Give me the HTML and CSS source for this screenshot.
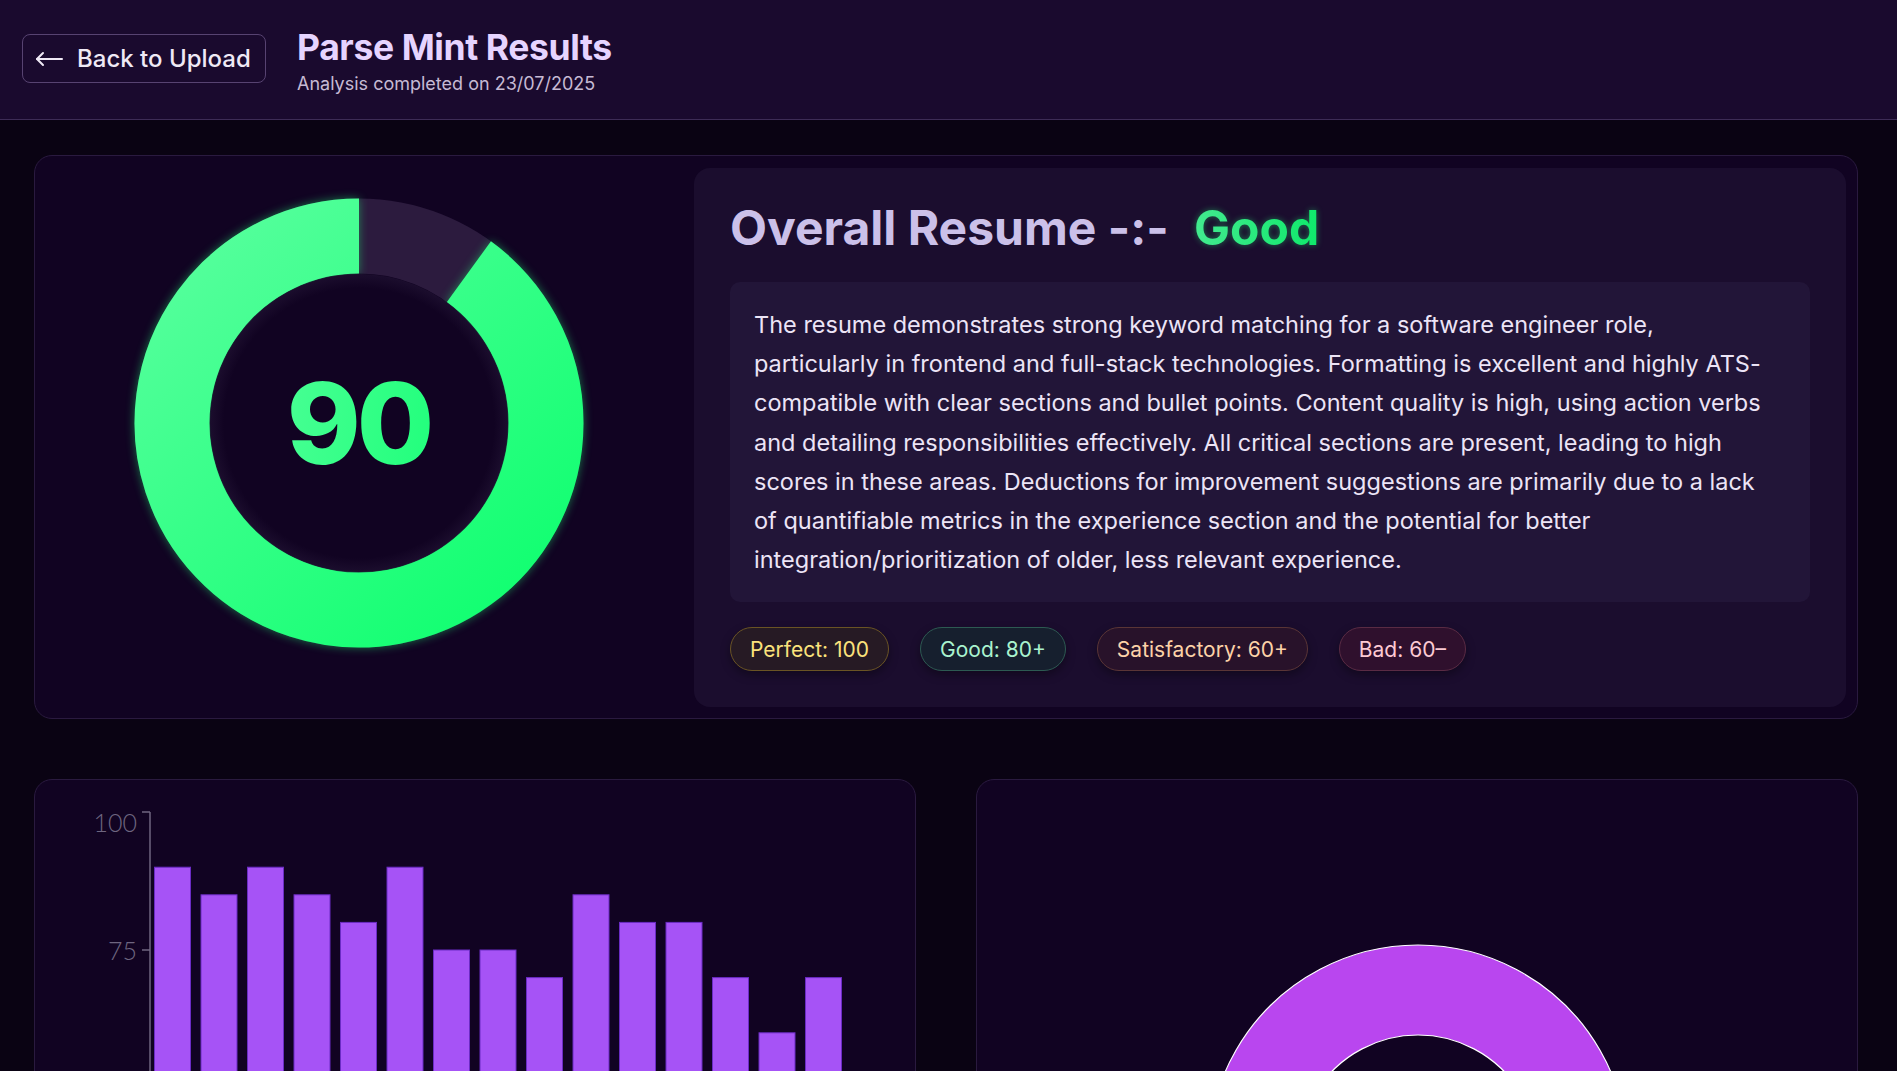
FILE: index.html
```html
<!DOCTYPE html>
<html lang="en">
<head>
<meta charset="utf-8">
<title>Parse Mint Results</title>
<link rel="stylesheet" href="styles.css">
</head>
<body>
<header class="topbar">
  <button class="back-btn">
    <svg class="back-icon" width="28" height="16" viewBox="0 0 28 16" fill="none" stroke="currentColor" stroke-width="2" stroke-linecap="round" stroke-linejoin="round"><path d="M27 8H2"/><path d="M8 2L2 8l6 6"/></svg>
    <span>Back to Upload</span>
  </button>
  <div class="title-block">
    <h1 class="page-title">Parse Mint Results</h1>
    <p class="page-sub">Analysis completed on 23/07/2025</p>
  </div>
</header>

<main class="content">
  <section class="summary-card">
    <div class="gauge-col">
      <div class="gauge">
        <svg class="gauge-svg" width="480" height="480" viewBox="0 0 480 480">
          <defs>
            <linearGradient id="gGreen" x1="60" y1="40" x2="420" y2="440" gradientUnits="userSpaceOnUse">
              <stop offset="0" stop-color="#58ff9e"/>
              <stop offset="1" stop-color="#0dff6e"/>
            </linearGradient>
            <radialGradient id="gInner" cx="240" cy="240" r="150" gradientUnits="userSpaceOnUse">
              <stop offset="0.9" stop-color="#110322"/>
              <stop offset="1" stop-color="#1c0e2e"/>
            </radialGradient>
          </defs>
          <circle cx="240" cy="240" r="187" fill="none" stroke="#2c1b3e" stroke-width="75"/>
          <path class="gauge-arc" d="M349.92 88.71 A187 187 0 1 1 240 53" fill="none" stroke="url(#gGreen)" stroke-width="75"/>
          <circle cx="240" cy="240" r="149" fill="url(#gInner)"/>
        </svg>
        <span class="gauge-value">90</span>
      </div>
    </div>

    <div class="summary-panel">
      <h2 class="summary-title">Overall Resume -:- <span class="grade">Good</span></h2>
      <div class="summary-text">
        <p>The resume demonstrates strong keyword matching for a software engineer role, particularly in frontend and full-stack technologies. Formatting is excellent and highly ATS-compatible with clear sections and bullet points. Content quality is high, using action verbs and detailing responsibilities effectively. All critical sections are present, leading to high scores in these areas. Deductions for improvement suggestions are primarily due to a lack of quantifiable metrics in the experience section and the potential for better integration/prioritization of older, less relevant experience.</p>
      </div>
      <div class="legend">
        <span class="badge badge-perfect">Perfect: 100</span>
        <span class="badge badge-good">Good: 80+</span>
        <span class="badge badge-sat">Satisfactory: 60+</span>
        <span class="badge badge-bad">Bad: 60–</span>
      </div>
    </div>
  </section>

  <section class="charts">
    <div class="chart-card">
      <svg class="bar-chart" width="880" height="640" viewBox="0 0 880 640">
        <g class="axis">
          <line x1="115" y1="32" x2="115" y2="640"/>
          <line x1="107" y1="32" x2="115" y2="32"/>
          <line x1="107" y1="170" x2="115" y2="170"/>
          <line x1="107" y1="308" x2="115" y2="308"/>
          <line x1="107" y1="446" x2="115" y2="446"/>
        </g>
        <g class="axis-labels">
          <text x="102" y="52">100</text>
          <text x="102" y="180">75</text>
        </g>
        <g class="bars">
          <rect x="119.5" y="87.2" width="36" height="560"/>
          <rect x="166" y="114.8" width="36" height="560"/>
          <rect x="212.5" y="87.2" width="36" height="560"/>
          <rect x="259" y="114.8" width="36" height="560"/>
          <rect x="305.5" y="142.4" width="36" height="560"/>
          <rect x="352" y="87.2" width="36" height="560"/>
          <rect x="398.5" y="170" width="36" height="560"/>
          <rect x="445" y="170" width="36" height="560"/>
          <rect x="491.5" y="197.6" width="36" height="560"/>
          <rect x="538" y="114.8" width="36" height="560"/>
          <rect x="584.5" y="142.4" width="36" height="560"/>
          <rect x="631" y="142.4" width="36" height="560"/>
          <rect x="677.5" y="197.6" width="36" height="560"/>
          <rect x="724" y="252.8" width="36" height="560"/>
          <rect x="770.5" y="197.6" width="36" height="560"/>
        </g>
      </svg>
    </div>
    <div class="chart-card">
      <svg class="pie-chart" width="880" height="640" viewBox="0 0 880 640">
        <path class="pie-ring" fill-rule="evenodd" d="M441 165a210 210 0 1 0 0.001 0z M441 255a120 120 0 1 0 0.001 0z"/>
      </svg>
    </div>
  </section>
</main>
</body>
</html>
```

FILE: styles.css
```css
* { box-sizing: border-box; }

html, body {
  margin: 0;
  padding: 0;
  background: #0a0313;
  font-family: Inter, "Noto Sans", sans-serif;
  color: #ece5f4;
}

body { overflow: hidden; }

.topbar {
  height: 120px;
  background: #1a0a2e;
  border-bottom: 1px solid #3d2c56;
  display: flex;
  align-items: center;
  gap: 31px;
  padding: 0 22px;
}

.back-btn {
  display: flex;
  align-items: center;
  gap: 14px;
  height: 49px;
  width: 244px;
  padding: 0 12px;
  margin-top: -2px;
  background: transparent;
  border: 1px solid #574371;
  border-radius: 8px;
  color: #efe9f5;
  font-family: inherit;
  font-size: 24px;
  font-weight: 500;
  letter-spacing: 0;
  cursor: pointer;
}

.back-icon { flex: none; }

.title-block {
  display: flex;
  flex-direction: column;
  margin-top: 4px;
}

.page-title {
  margin: 0;
  font-size: 35.5px;
  font-weight: 700;
  line-height: 42px;
  letter-spacing: -0.4px;
  color: #e6d4ff;
}

.page-sub {
  margin: 3px 0 0;
  font-size: 18px;
  line-height: 24px;
  letter-spacing: 0;
  color: #c6bad4;
}

.content {
  padding: 35px 39px 0 34px;
}

.summary-card {
  display: grid;
  grid-template-columns: 647px 1152px;
  column-gap: 12px;
  padding: 12px 11px 11px 0;
  background: #110322;
  border: 1px solid #2a1a3f;
  border-radius: 18px;
}

.gauge-col {
  display: flex;
  align-items: center;
  justify-content: center;
  padding-bottom: 30px;
}

.gauge {
  position: relative;
  width: 480px;
  height: 480px;
}

.gauge-svg { display: block; }

.gauge-arc {
  filter: drop-shadow(0 0 5px rgba(30, 255, 120, 0.45));
}

.gauge-value {
  position: absolute;
  left: 0;
  right: 0;
  top: 50%;
  transform: translateY(-50%);
  text-align: center;
  font-size: 112px;
  font-weight: 800;
  letter-spacing: -4px;
  line-height: 1;
  background: linear-gradient(100deg, #62ffa4 10%, #12ff72 80%);
  -webkit-background-clip: text;
  background-clip: text;
  color: transparent;
}

.summary-panel {
  background: #1b0d2e;
  border-radius: 16px;
  padding: 30px 36px 36px;
}

.summary-title {
  margin: 0;
  font-size: 48px;
  font-weight: 700;
  line-height: 60px;
  letter-spacing: 0;
  color: #cbc0e9;
}

.grade {
  margin-left: 14px;
  background: linear-gradient(90deg, #43ea8f, #0fe96b);
  -webkit-background-clip: text;
  background-clip: text;
  color: transparent;
  filter: drop-shadow(0 0 3px rgba(30, 230, 110, 0.45));
}

.summary-text {
  margin-top: 24px;
  background: #221538;
  border-radius: 10px;
  padding: 23px 28px 23px 24px;
}

.summary-text p {
  margin: 0;
  font-size: 23.5px;
  line-height: 39.2px;
  letter-spacing: 0;
  color: #ece4f6;
}

.legend {
  display: flex;
  gap: 31px;
  margin-top: 25px;
}

.badge {
  display: inline-flex;
  align-items: center;
  height: 44px;
  padding: 0 19px;
  border-radius: 999px;
  border: 1px solid;
  font-size: 21px;
  letter-spacing: 0;
  box-shadow: 0 4px 10px rgba(0, 0, 0, 0.35);
}

.badge-perfect { background: #261a24; border-color: #6a5424; color: #fbe27c; }
.badge-good { background: #161f2e; border-color: #2d5a52; color: #a9f3cf; }
.badge-sat { background: #28122a; border-color: #5a3536; color: #fdd2a8; }
.badge-bad { background: #2f102d; border-color: #5a2b44; color: #fccad3; }

.charts {
  display: grid;
  grid-template-columns: 1fr 1fr;
  gap: 60px;
  margin-top: 60px;
}

.chart-card {
  height: 700px;
  background: #110322;
  border: 1px solid #2a1a3f;
  border-radius: 18px;
  overflow: hidden;
}

.bar-chart, .pie-chart { display: block; }

.axis line {
  stroke: #6f6680;
  stroke-width: 1.5;
}

.axis-labels text {
  fill: #6e6680;
  font-family: Lato, Inter, sans-serif;
  font-weight: 300;
  font-size: 25px;
  text-anchor: end;
}

.bars rect {
  fill: #a653f6;
  stroke: #6b2cc4;
  stroke-width: 1;
}

.pie-ring {
  fill: #b946ef;
  stroke: #ffffff;
  stroke-width: 1.2;
}
```
